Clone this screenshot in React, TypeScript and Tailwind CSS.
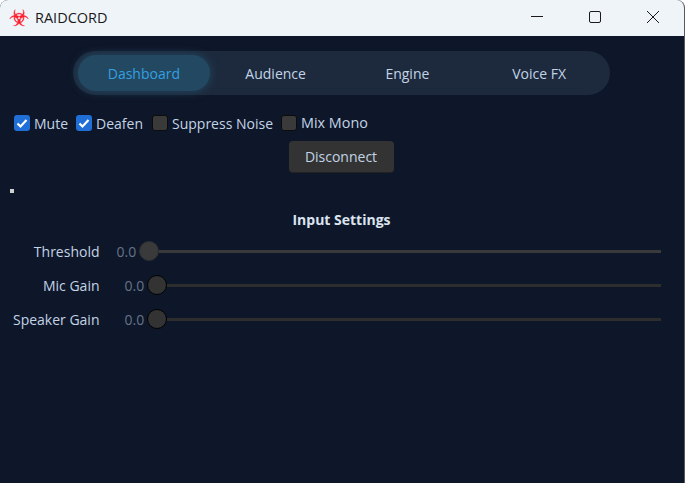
import { GiBiohazard } from "react-icons/gi";

const tabs = ["Dashboard", "Audience", "Engine", "Voice FX"];

const Check = ({ label, on }: { label: string; on?: boolean }) => (
  <label className="flex items-center gap-[4px]">
    <span
      className={
        on
          ? "w-4 h-4 rounded-[3px] bg-[#1f6fd6] flex items-center justify-center"
          : "w-4 h-4 rounded-[3px] bg-[#3a3a3a] border border-[#0c0c0c]"
      }
    >
      {on && (
        <svg width="12" height="12" viewBox="0 0 12 12" fill="none">
          <path d="M1.5 6.5 L4.5 9.5 L10.5 3" stroke="white" strokeWidth="2.2" />
        </svg>
      )}
    </span>
    <span>{label}</span>
  </label>
);

const Slider = ({ label, valueGap, faded }: { label: string; valueGap: string; faded?: boolean }) => (
  <div className="flex items-center h-[34px] text-[14px]">
    <div className="w-[99.5px] text-right text-[#c3d3e6] whitespace-nowrap">{label}</div>
    <div className={`${valueGap} text-[#65748a]`}>0.0</div>
    <div className="flex-1 ml-[3px] mr-[23px] flex items-center">
      <div className={faded ? "w-5 h-5 rounded-full bg-[#3a3a3a] border border-[#2c2f33]" : "w-5 h-5 rounded-full bg-[#333333] border border-[#000000]"} />
      <div className={faded ? "flex-1 h-[3px] bg-[#3a3a3a]" : "flex-1 h-[3px] bg-[#2d2d2d]"} />
    </div>
  </div>
);

export default function App() {
  return (
    <div
      className="w-[685px] h-[483px] overflow-hidden bg-[#0e1729] flex flex-col border-r border-[#555b63] rounded-t-[8px] text-[#c3d3e6] text-[14px]"
      style={{ fontFamily: '"Open Sans", "Noto Sans", sans-serif' }}
    >
      {/* Title bar */}
      <div className="h-9 shrink-0 bg-[#eff4f9] flex items-center text-[#1a1a1a]">
        <GiBiohazard className="ml-[9px] w-5 h-5 text-[#ff1f2d]" stroke="currentColor" strokeWidth={12} />
        <span className="ml-[6px] text-[14.5px]">RAIDCORD</span>
        <div className="ml-auto flex items-center">
          <svg width="46" height="36" viewBox="0 0 46 36" fill="none" className="mr-[12px]">
            <path d="M17 16.5 H29" stroke="#1a1a1a" strokeWidth="1" />
          </svg>
          <svg width="46" height="36" viewBox="0 0 46 36" fill="none" className="mr-[12px]">
            <rect x="17.5" y="11.5" width="11" height="11" rx="1.5" stroke="#1a1a1a" strokeWidth="1" />
          </svg>
          <svg width="46" height="36" viewBox="0 0 46 36" fill="none" className="mr-[8px]">
            <path d="M17 11 L29 23 M29 11 L17 23" stroke="#1a1a1a" strokeWidth="1" />
          </svg>
        </div>
      </div>

      {/* Tabs */}
      <div className="mt-[15px] ml-[73px] w-[537px] h-[44px] rounded-[22px] bg-[#1d2a3d] flex items-center px-[5px]">
        {tabs.map((t, i) => (
          <div
            key={t}
            className={
              i === 0
                ? "w-[132px] h-9 rounded-[18px] bg-[#234862] text-[#33a0e0] flex items-center justify-center shadow-[0_0_10px_#234862]"
                : "w-[132px] h-9 flex items-center justify-center text-[#c3d3e6]"
            }
          >
            {t}
          </div>
        ))}
      </div>

      {/* Toggles */}
      <div className="mt-[16px] ml-[14px] flex items-center gap-[8px] h-[24px]">
        <Check label="Mute" on />
        <Check label="Deafen" on />
        <span className="ml-[1px]">
          <Check label="Suppress Noise" />
        </span>
        <span className="text-[14.4px]">
          <Check label="Mix Mono" />
        </span>
      </div>

      <div className="mt-[6px] flex justify-center">
        <button className="w-[105px] h-[32px] rounded-[4px] bg-[#333333] text-[#c3d3e6] ml-[-2px] border-b border-[#222222]">Disconnect</button>
      </div>

      <div className="mt-[16px] ml-[10px] w-[4px] h-[4px] bg-[#d0d0d0]" />

      <div className="mt-[17px] text-center font-bold text-[#dbe4f0] h-5 leading-5 pr-[1px]">Input Settings</div>

      <div className="mt-[4px] flex flex-col">
        <Slider label="Threshold" valueGap="ml-[17px]" faded />
        <Slider label="Mic Gain" valueGap="ml-[25px]" />
        <Slider label="Speaker Gain" valueGap="ml-[25px]" />
      </div>
    </div>
  );
}
